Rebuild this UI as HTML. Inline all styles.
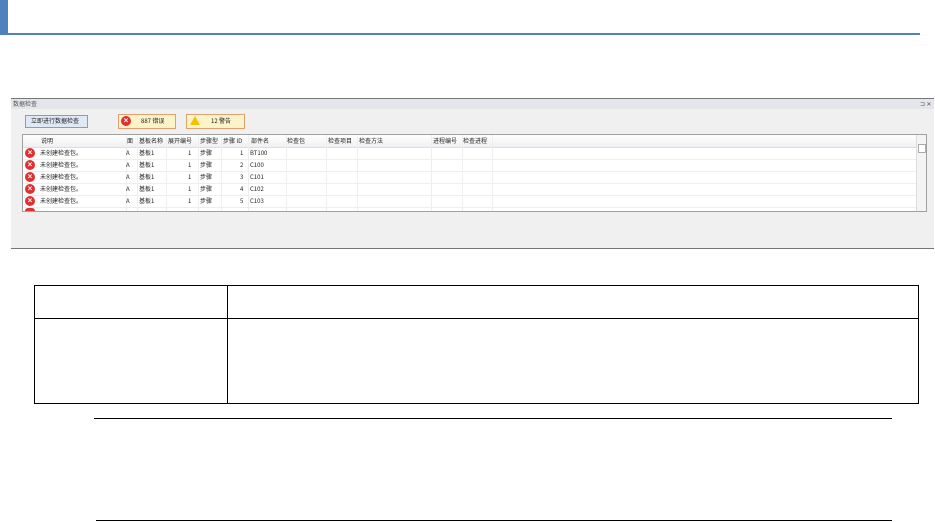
<html><head><style>
body{margin:0;width:935px;height:522px;background:#fff;position:relative;overflow:hidden;font-family:"Liberation Sans","Noto Sans CJK SC",sans-serif;}
.a{position:absolute}
.t{font-size:6px;line-height:8px;color:#222;white-space:nowrap;font-family:"Noto Sans CJK SC",sans-serif}
.ic{position:absolute;width:10px;height:10px;border-radius:50%;background:#e03030;color:#fff;font-size:8px;line-height:10px;text-align:center;font-weight:bold}
</style></head><body>
<div class="a" style="left:0;top:0;width:8px;height:35px;background:#4f81bd"></div>
<div class="a" style="left:8px;top:33px;width:912px;height:2px;background:#4f81bd"></div>
<div class="a" style="left:11px;top:98px;width:923px;height:149px;background:#f0f0f0;border-top:1px solid #777;border-bottom:1px solid #777"></div>
<div class="a" style="left:11px;top:99px;width:923px;height:10px;background:#e4e6ea"></div>
<div class="a t" style="left:13px;top:100px;color:#555">数据检查</div>
<div class="a t" style="left:920px;top:100px;color:#555">⊐ ✕</div>
<div class="a" style="left:25px;top:115px;width:61px;height:11px;background:#dfe9f5;border:1px solid #7aa0d0"></div>
<div class="a t" style="left:31px;top:117px">立即进行数据检查</div>
<div class="a" style="left:118px;top:114px;width:56px;height:13px;background:#fdf3c8;border:1px solid #e0a070"></div>
<div class="ic" style="left:121px;top:116px">×</div>
<div class="a t" style="left:141px;top:117px">887 错误</div>
<div class="a" style="left:186px;top:114px;width:57px;height:13px;background:#fdf3c8;border:1px solid #e0a070"></div>
<div class="a" style="left:190px;top:116px;width:0;height:0;border-left:5px solid transparent;border-right:5px solid transparent;border-bottom:9px solid #f2c200"></div>
<div class="a t" style="left:211px;top:117px">12 警告</div>
<div class="a" style="left:22px;top:134px;width:903px;height:76px;background:#fff;border:1px solid #a0a0a0;overflow:hidden">
<div class="a" style="left:0;top:0;width:893px;height:12px;background:linear-gradient(#fff,#eef0f3);border-bottom:1px solid #ddd"></div>
<div class="a" style="left:893px;top:0;width:10px;height:76px;background:#f4f4f4;border-left:1px solid #ddd"></div>
<div class="a" style="left:895px;top:9px;width:6px;height:7px;background:#fff;border:1px solid #aaa"></div>
<svg class="a" style="left:0;top:0" width="893" height="76">
<g stroke="#eee" stroke-width="1">
<line x1="0" y1="24.5" x2="893" y2="24.5"/><line x1="0" y1="36.5" x2="893" y2="36.5"/><line x1="0" y1="48.5" x2="893" y2="48.5"/><line x1="0" y1="60.5" x2="893" y2="60.5"/><line x1="0" y1="72.5" x2="893" y2="72.5"/>
<line x1="103.5" y1="0" x2="103.5" y2="76"/><line x1="114.5" y1="0" x2="114.5" y2="76"/><line x1="143.5" y1="0" x2="143.5" y2="76"/><line x1="175.5" y1="0" x2="175.5" y2="76"/><line x1="198.5" y1="0" x2="198.5" y2="76"/><line x1="225.5" y1="0" x2="225.5" y2="76"/><line x1="263.5" y1="0" x2="263.5" y2="76"/><line x1="303.5" y1="0" x2="303.5" y2="76"/><line x1="334.5" y1="0" x2="334.5" y2="76"/><line x1="408.5" y1="0" x2="408.5" y2="76"/><line x1="439.5" y1="0" x2="439.5" y2="76"/><line x1="469.5" y1="0" x2="469.5" y2="76"/>
</g></svg>
<div class="a t" style="top:2px;left:18px">说明</div><div class="a t" style="top:2px;left:104px">面</div><div class="a t" style="top:2px;left:116px">基板名称</div><div class="a t" style="top:2px;left:145px">展开编号</div><div class="a t" style="top:2px;left:177px">步骤型</div><div class="a t" style="top:2px;left:200px">步骤 ID</div><div class="a t" style="top:2px;left:228px">部件名</div><div class="a t" style="top:2px;left:264px">检查包</div><div class="a t" style="top:2px;left:305px">检查项目</div><div class="a t" style="top:2px;left:336px">检查方法</div><div class="a t" style="top:2px;left:410px">进程编号</div><div class="a t" style="top:2px;left:440px">检查进程</div>
</div>
<div class="ic" style="left:25px;top:148px">×</div><div class="a t" style="left:40px;top:149px">未创建检查包。</div><div class="a t" style="left:126px;top:149px">A</div><div class="a t" style="left:139px;top:149px">基板1</div><div class="a t" style="left:188px;top:149px">1</div><div class="a t" style="left:200px;top:149px">步骤</div><div class="a t" style="left:240px;top:149px">1</div><div class="a t" style="left:250px;top:149px">BT100</div>
<div class="ic" style="left:25px;top:160px">×</div><div class="a t" style="left:40px;top:161px">未创建检查包。</div><div class="a t" style="left:126px;top:161px">A</div><div class="a t" style="left:139px;top:161px">基板1</div><div class="a t" style="left:188px;top:161px">1</div><div class="a t" style="left:200px;top:161px">步骤</div><div class="a t" style="left:240px;top:161px">2</div><div class="a t" style="left:250px;top:161px">C100</div>
<div class="ic" style="left:25px;top:172px">×</div><div class="a t" style="left:40px;top:173px">未创建检查包。</div><div class="a t" style="left:126px;top:173px">A</div><div class="a t" style="left:139px;top:173px">基板1</div><div class="a t" style="left:188px;top:173px">1</div><div class="a t" style="left:200px;top:173px">步骤</div><div class="a t" style="left:240px;top:173px">3</div><div class="a t" style="left:250px;top:173px">C101</div>
<div class="ic" style="left:25px;top:184px">×</div><div class="a t" style="left:40px;top:185px">未创建检查包。</div><div class="a t" style="left:126px;top:185px">A</div><div class="a t" style="left:139px;top:185px">基板1</div><div class="a t" style="left:188px;top:185px">1</div><div class="a t" style="left:200px;top:185px">步骤</div><div class="a t" style="left:240px;top:185px">4</div><div class="a t" style="left:250px;top:185px">C102</div>
<div class="ic" style="left:25px;top:196px">×</div><div class="a t" style="left:40px;top:197px">未创建检查包。</div><div class="a t" style="left:126px;top:197px">A</div><div class="a t" style="left:139px;top:197px">基板1</div><div class="a t" style="left:188px;top:197px">1</div><div class="a t" style="left:200px;top:197px">步骤</div><div class="a t" style="left:240px;top:197px">5</div><div class="a t" style="left:250px;top:197px">C103</div>
<div class="a" style="left:25px;top:208px;width:10px;height:3px;background:#e03030;border-radius:5px 5px 0 0"></div>
<div class="a" style="left:34px;top:285px;width:883px;height:117px;border:1px solid #000"></div>
<div class="a" style="left:34px;top:318px;width:885px;height:1px;background:#000"></div>
<div class="a" style="left:227px;top:285px;width:1px;height:119px;background:#000"></div>
<div class="a" style="left:94px;top:418px;width:798px;height:1px;background:#000"></div>
<div class="a" style="left:96px;top:520px;width:796px;height:1px;background:#000"></div>
</body></html>
